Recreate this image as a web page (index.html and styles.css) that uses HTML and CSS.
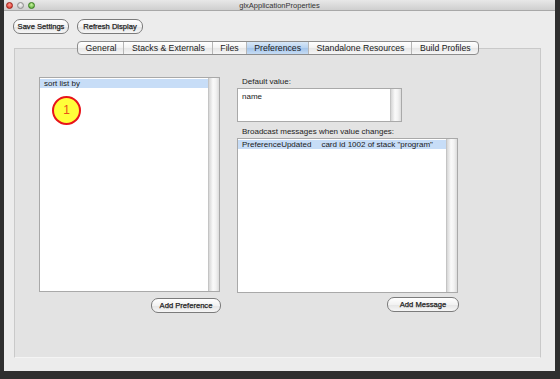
FILE: index.html
```html
<!DOCTYPE html>
<html lang="en">
<head>
    <meta charset="UTF-8">
    <title>glxApplicationProperties</title>
    <link rel="stylesheet" href="styles.css">
</head>
<body>
    <div class="window">
        <div class="titlebar">
            <div class="lights">
                <span class="light red"></span>
                <span class="light grey"></span>
                <span class="light green"></span>
            </div>
            <div class="title">glxApplicationProperties</div>
        </div>

        <div class="toolbar">
            <button class="pill save">Save Settings</button>
            <button class="pill refresh">Refresh Display</button>
        </div>

        <div class="tabs">
            <div class="tab">General</div>
            <div class="tab">Stacks &amp; Externals</div>
            <div class="tab">Files</div>
            <div class="tab selected">Preferences</div>
            <div class="tab">Standalone Resources</div>
            <div class="tab">Build Profiles</div>
        </div>

        <div class="pane">
            <div class="col left-col">
                <div class="list pref-list">
                    <div class="list-body">
                        <div class="row selected">sort list by</div>
                        <div class="marker">1</div>
                    </div>
                    <div class="scrollbar"></div>
                </div>
                <button class="pill add-pref">Add Preference</button>
            </div>

            <div class="col right-col">
                <div class="label">Default value:</div>
                <div class="list default-box">
                    <div class="list-body">
                        <div class="row">name</div>
                    </div>
                    <div class="scrollbar"></div>
                </div>
                <div class="label">Broadcast messages when value changes:</div>
                <div class="list msg-list">
                    <div class="list-body">
                        <div class="row selected"><span class="msg">PreferenceUpdated</span>card id 1002 of stack "program"</div>
                    </div>
                    <div class="scrollbar"></div>
                </div>
                <button class="pill add-msg">Add Message</button>
            </div>
        </div>
    </div>
</body>
</html>
```

FILE: styles.css
```css
body {
    margin: 0;
    width: 560px;
    height: 379px;
    background-color: #2f2f2f;
    font-family: "Liberation Sans", Arial, sans-serif;
    color: #111;
    overflow: hidden;
}

.window {
    margin-left: 4px;
    width: 551px;
    height: 371px;
    background-color: #ececec;
    display: flex;
    flex-direction: column;
}

.titlebar {
    height: 11px;
    display: flex;
    align-items: center;
    position: relative;
    background: linear-gradient(to bottom, #e8e8e8, #cfcfcf);
    border-bottom: 1px solid #a8a8a8;
    box-sizing: border-box;
}

.lights {
    display: flex;
    gap: 4px;
    padding-left: 2px;
}

.light {
    width: 7px;
    height: 7px;
    border-radius: 50%;
    box-sizing: border-box;
}

.light.red {
    background: radial-gradient(circle at 50% 35%, #ff9a8f, #d8261c);
    border: 1px solid #9c1d16;
}

.light.grey {
    background: radial-gradient(circle at 50% 35%, #f4f4f4, #bcbcbc);
    border: 1px solid #8e8e8e;
}

.light.green {
    background: radial-gradient(circle at 50% 35%, #c8f2a0, #4ea62a);
    border: 1px solid #357a1c;
}

.title {
    position: absolute;
    left: 0;
    right: 0;
    text-align: center;
    font-size: 7.5px;
    color: #333;
}

.toolbar {
    display: flex;
    gap: 8px;
    padding: 8px 0 0 9px;
    height: 23px;
    box-sizing: border-box;
}

.pill {
    font-family: "Liberation Sans", Arial, sans-serif;
    font-size: 7.6px;
    -webkit-text-stroke: 0.25px #222;
    color: #222;
    height: 14px;
    padding: 0;
    border: 1px solid #7b7b7b;
    border-radius: 7px;
    background: linear-gradient(to bottom, #ffffff, #f2f2f2 50%, #e4e4e4 51%, #f6f6f6);
    line-height: 12px;
    white-space: nowrap;
}

.save {
    width: 56px;
    height: 15px;
}

.refresh {
    width: 66px;
    height: 15px;
}

.tabs {
    display: flex;
    align-self: flex-start;
    margin: 7px 0 -7px 73px;
    height: 14px;
    border: 1px solid #8d8d8d;
    border-radius: 4px;
    background: linear-gradient(to bottom, #ffffff, #f2f2f2 50%, #e6e6e6 51%, #f6f6f6);
    box-sizing: border-box;
    position: relative;
    z-index: 1;
    overflow: hidden;
}

.tab {
    font-size: 8.7px;
    line-height: 12px;
    padding: 0 7px 0 7.5px;
    border-left: 1px solid #b6b6b6;
    color: #1a1a1a;
}

.tab:first-child {
    border-left: none;
}

.tab.selected {
    background: linear-gradient(to bottom, #d8e8f8, #b7d2f0 50%, #a3c4ea 51%, #c6dcf4);
}

.pane {
    margin: 0 14px 0 10px;
    height: 310px;
    background-color: #e3e3e3;
    border: 1px solid #c9c9c9;
    border-bottom-color: #f4f4f4;
    box-sizing: border-box;
    display: flex;
    padding: 28px 0 0 24px;
    gap: 17px;
}

.col {
    display: flex;
    flex-direction: column;
}

.left-col {
    width: 181px;
}

.right-col {
    width: 221px;
}

.list {
    display: flex;
    background-color: #fff;
    border: 1px solid #a9a9a9;
    box-sizing: border-box;
}

.list-body {
    flex: 1;
    position: relative;
    padding-top: 1px;
}

.scrollbar {
    width: 10px;
    background: linear-gradient(to right, #d6d6d6, #fafafa 40%, #f2f2f2 70%, #dcdcdc);
    border-left: 1px solid #c4c4c4;
}

.row {
    font-size: 8px;
    line-height: 9px;
    padding-left: 4px;
    white-space: nowrap;
    color: #1a1a1a;
}

.row.selected {
    background-color: #c7ddf7;
}

.msg {
    margin-right: 10px;
}

.pref-list {
    height: 215px;
}

.marker {
    position: absolute;
    left: 12px;
    top: 18px;
    width: 29px;
    height: 29px;
    border: 2px solid #e8141a;
    border-radius: 50%;
    background-color: #ffff3a;
    box-sizing: border-box;
    color: #e8501a;
    font-size: 12px;
    text-align: center;
    line-height: 25px;
}

.add-pref {
    align-self: flex-end;
    margin: 6px -1px 0 0;
    width: 70px;
    height: 15px;
}

.label {
    font-size: 8px;
    line-height: 9px;
    padding-left: 5px;
    color: #222;
}

.default-box {
    width: 165px;
    height: 34px;
    margin: 2px 0 5px;
}

.default-box .row {
    padding-top: 2px;
}

.msg-list {
    height: 155px;
    margin-top: 2px;
}

.add-msg {
    align-self: flex-end;
    margin: 4px -1px 0 0;
    width: 72px;
    height: 15px;
}
```
